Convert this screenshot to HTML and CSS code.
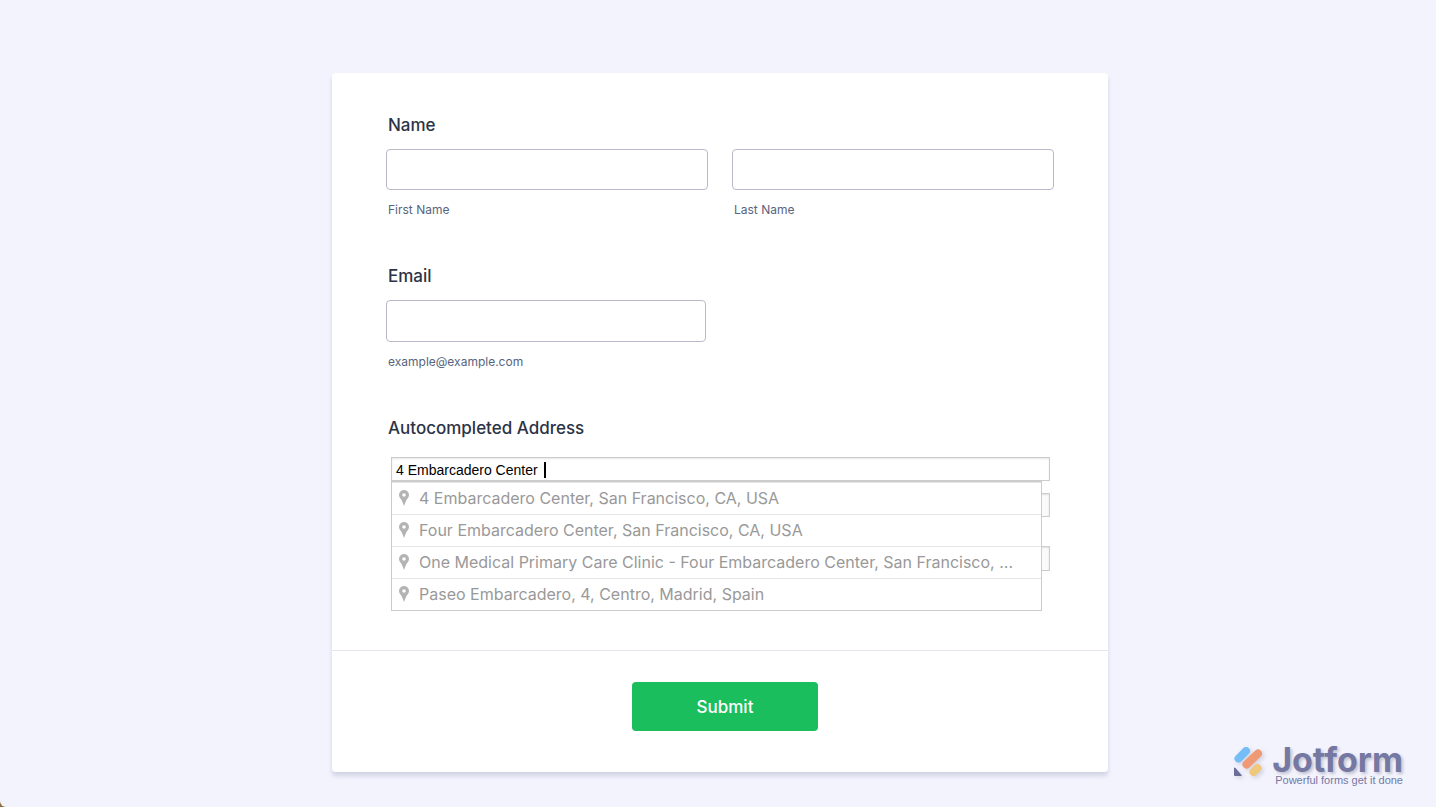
FILE: index.html
```
<!DOCTYPE html>
<html lang="en">

<head>
    <meta charset="UTF-8">
    <meta name="viewport" content="width=device-width, initial-scale=1.0">
    <title>Form</title>
    <link rel="stylesheet" href="styles.css">
</head>

<body>
    <div class="page">
        <form class="card">
            <div class="fields">
                <fieldset class="field">
                    <legend class="label">Name</legend>
                    <div class="name-row">
                        <div class="name-part">
                            <input class="input" id="first" type="text">
                            <label class="sublabel" for="first">First Name</label>
                        </div>
                        <div class="name-part">
                            <input class="input" id="last" type="text">
                            <label class="sublabel" for="last">Last Name</label>
                        </div>
                    </div>
                </fieldset>

                <div class="field">
                    <label class="label" for="email">Email</label>
                    <input class="input input-email" id="email" type="email" aria-describedby="email-hint">
                    <span class="sublabel" id="email-hint">example@example.com</span>
                </div>

                <div class="field">
                    <label class="label" for="address">Autocompleted Address</label>
                    <div class="address">
                        <div class="search">
                            <input class="line" id="address" type="text" value="4 Embarcadero Center">
                            <span class="caret"></span>
                        </div>
                        <input class="line line-off" type="text" aria-label="Street Address" disabled>
                        <input class="line line-off line-last" type="text" aria-label="City" disabled>
                        <ul class="suggestions">
                            <li class="suggestion">
                                <svg class="pin" viewBox="0 0 10 16"><path fill-rule="evenodd" d="M5 0a5 5 0 0 1 5 5c0 2-1.200 3-2.200 4.500C6.800 11.200 6.200 13 5 16 3.800 13 3.200 11.200 2.200 9.500 1.200 8 0 7 0 5a5 5 0 0 1 5-5zm0 3.200a1.800 1.800 0 1 0 0 3.600 1.800 1.800 0 0 0 0-3.600z"/></svg>
                                <span class="place">4 Embarcadero Center, San Francisco, CA, USA</span>
                            </li>
                            <li class="suggestion">
                                <svg class="pin" viewBox="0 0 10 16"><path fill-rule="evenodd" d="M5 0a5 5 0 0 1 5 5c0 2-1.200 3-2.200 4.500C6.800 11.200 6.200 13 5 16 3.800 13 3.200 11.200 2.200 9.500 1.200 8 0 7 0 5a5 5 0 0 1 5-5zm0 3.200a1.800 1.800 0 1 0 0 3.600 1.800 1.800 0 0 0 0-3.600z"/></svg>
                                <span class="place">Four Embarcadero Center, San Francisco, CA, USA</span>
                            </li>
                            <li class="suggestion">
                                <svg class="pin" viewBox="0 0 10 16"><path fill-rule="evenodd" d="M5 0a5 5 0 0 1 5 5c0 2-1.200 3-2.200 4.500C6.800 11.200 6.200 13 5 16 3.800 13 3.200 11.200 2.200 9.500 1.200 8 0 7 0 5a5 5 0 0 1 5-5zm0 3.200a1.800 1.800 0 1 0 0 3.600 1.800 1.800 0 0 0 0-3.600z"/></svg>
                                <span class="place">One Medical Primary Care Clinic - Four Embarcadero Center, San Francisco, ...</span>
                            </li>
                            <li class="suggestion">
                                <svg class="pin" viewBox="0 0 10 16"><path fill-rule="evenodd" d="M5 0a5 5 0 0 1 5 5c0 2-1.200 3-2.200 4.500C6.800 11.200 6.200 13 5 16 3.800 13 3.200 11.200 2.200 9.500 1.200 8 0 7 0 5a5 5 0 0 1 5-5zm0 3.200a1.800 1.800 0 1 0 0 3.600 1.800 1.800 0 0 0 0-3.600z"/></svg>
                                <span class="place">Paseo Embarcadero, 4, Centro, Madrid, Spain</span>
                            </li>
                        </ul>
                    </div>
                </div>
            </div>

            <div class="actions">
                <button class="submit" type="button">Submit</button>
            </div>
        </form>

        <div class="brand">
            <svg class="brand-mark" viewBox="0 0 30 32">
                <path d="M4.500 12.500 12 5" stroke="#74bdf6" stroke-width="8" stroke-linecap="round"/>
                <path d="M12.500 18.500 24 7.500" stroke="#ef9a74" stroke-width="8" stroke-linecap="round"/>
                <path d="M19.500 26 23.500 22" stroke="#efc87c" stroke-width="8" stroke-linecap="round"/>
                <path d="M0 22.500v6.500q0 1 1 1h6q1.500 0 .500-1L1.500 22Q0 21 0 22.500z" fill="#696d98"/>
            </svg>
            <div class="brand-text">
                <span class="brand-name">Jotform</span>
                <span class="brand-tag">Powerful forms get it done</span>
            </div>
        </div>
    </div>
</body>

</html>
```
FILE: styles.css
```
* {
    box-sizing: border-box;
}

html {
    background-color: #8d6b3c;
}

body {
    margin: 0;
    font-family: Inter, "Liberation Sans", sans-serif;
}

.page {
    display: grid;
    grid-template-columns: 1fr minmax(0, 776px) 1fr;
    align-items: start;
    min-height: 100vh;
    padding: 73px 0 0 4px;
    background-color: #f3f3fe;
    border-bottom-left-radius: 6px;
}

.card {
    grid-column: 2;
    background-color: #fff;
    border-radius: 4px;
    box-shadow: 0 4px 4px rgba(87, 100, 126, 0.21);
}

.fields {
    display: flex;
    flex-direction: column;
    gap: 45px;
    padding: 40px 54px 79px;
}

.field {
    display: flex;
    flex-direction: column;
    min-width: 0;
    margin: 0;
    padding: 0;
    border: 0;
}

.label {
    margin-bottom: 12px;
    padding: 0 2px;
    font-size: 17px;
    font-weight: 500;
    line-height: 24px;
    color: #2c3345;
}

.name-row {
    display: flex;
    gap: 24px;
}

.name-part {
    display: flex;
    flex: 1;
    flex-direction: column;
}

.input {
    width: 100%;
    height: 41px;
    padding: 0 10px;
    border: 1px solid #b8bacb;
    border-radius: 4px;
    background-color: #fff;
    font-family: inherit;
    font-size: 16px;
}

.input-email {
    max-width: 320px;
    height: 42px;
}

.sublabel {
    margin-top: 11px;
    padding: 0 2px;
    font-size: 12px;
    line-height: 18px;
    color: #57647e;
}

.address {
    position: relative;
    display: flex;
    flex-direction: column;
    gap: 12px;
    padding: 5px 4px 0 5px;
}

.search {
    position: relative;
}

.line {
    display: block;
    width: 100%;
    height: 24px;
    padding: 1px 4px 0;
    border: 1px solid #ccc;
    background-color: #fff;
    box-shadow: inset 0 1px 2px rgba(0, 0, 0, 0.1);
    font-family: "Liberation Sans", Arial, sans-serif;
    font-size: 14px;
    color: #000;
}

.line-off {
    background-color: #fafafa;
}

.line-last {
    height: 25px;
    margin-top: 17px;
}

.caret {
    position: absolute;
    top: 5px;
    left: 153px;
    width: 2px;
    height: 16px;
    background-color: #000;
}

/* list of matching places, drops over the lines below */
.suggestions {
    position: absolute;
    top: 29px;
    left: 5px;
    right: 12px;
    margin: 0;
    padding: 0;
    list-style: none;
    background-color: #fff;
    border: 1px solid #ccc;
}

.suggestion {
    display: flex;
    align-items: center;
    gap: 10px;
    height: 32px;
    padding: 0 7px 2px;
    border-top: 1px solid #e6e6e6;
    font-size: 16px;
    color: #999;
}

.pin {
    flex: none;
    width: 10px;
    height: 16px;
    fill: #b3b3b3;
}

.place {
    overflow: hidden;
    white-space: nowrap;
    text-overflow: ellipsis;
}

.actions {
    display: flex;
    justify-content: center;
    padding: 31px 0 41px 10px;
    border-top: 1px solid #e6e6f3;
}

.submit {
    min-width: 186px;
    height: 49px;
    border: 0;
    border-radius: 4px;
    background-color: #1abe5d;
    font-family: inherit;
    font-size: 17px;
    font-weight: 500;
    color: #fff;
}

.brand {
    grid-column: 3;
    display: flex;
    gap: 8px;
    align-self: end;
    justify-self: end;
    padding: 0 33px 21px 0;
    color: #7478a2;
}

.brand-mark {
    width: 30px;
    height: 32px;
    margin-top: 1px;
    fill: none;
    filter: drop-shadow(2px 2px 2px rgba(80, 80, 100, 0.2));
}

.brand-text {
    display: flex;
    flex-direction: column;
    align-items: flex-end;
}

.brand-name {
    font-size: 34px;
    font-weight: 700;
    line-height: 30px;
    text-shadow: 2px 2px 3px rgba(80, 80, 100, 0.3);
}

.brand-tag {
    font-family: "Liberation Sans", Arial, sans-serif;
    font-size: 11px;
    line-height: 12px;
    margin-top: -1px;
}
```
